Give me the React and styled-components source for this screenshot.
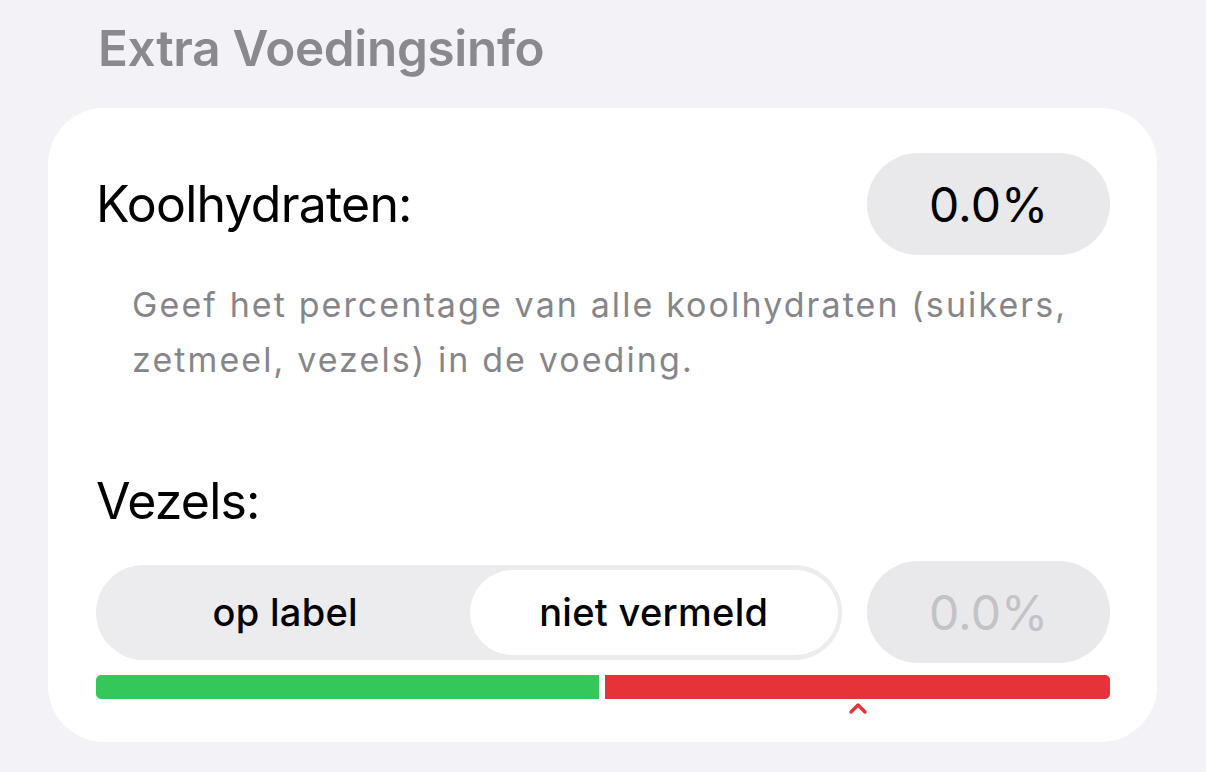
import React from 'react'
import styled, { createGlobalStyle } from 'styled-components'

const GlobalStyle = createGlobalStyle`
  html, body {
    margin: 0;
    padding: 0;
    background: #f2f2f7;
    font-family: Inter, "Noto Sans", sans-serif;
    -webkit-font-smoothing: antialiased;
  }
`

const Page = styled.div`
  width: 1206px;
  height: 772px;
  padding: 0 0 0 48px;
  box-sizing: border-box;
  overflow: hidden;
`

const SectionTitle = styled.h2`
  margin: 0;
  padding: 18px 0 0 50px;
  height: 90px;
  box-sizing: border-box;
  font-size: 49.4px;
  line-height: 60px;
  font-weight: 600;
  letter-spacing: -0.3px;
  color: #8a8a8e;
`

const Card = styled.div`
  width: 1109px;
  height: 634px;
  margin-top: 18px;
  background: #fff;
  border-radius: 56px;
  padding: 45px 47px 0 48px;
  box-sizing: border-box;
  display: flex;
  flex-direction: column;
`

const Row = styled.div`
  display: flex;
  align-items: center;
  justify-content: space-between;
  gap: 25px;
`

const Label = styled.div`
  font-size: 50px;
  line-height: 60px;
  color: #000;
  letter-spacing: -0.8px;
`

const ValuePill = styled.div`
  flex: none;
  width: 243px;
  height: 102px;
  border-radius: 51px;
  background: #e9e9eb;
  display: flex;
  align-items: center;
  justify-content: center;
  font-size: 48px;
  color: ${p => (p.$muted ? '#c3c3c7' : '#000')};
`

const Hint = styled.p`
  margin: 22px 0 0 36px;
  font-size: 34px;
  line-height: 55px;
  color: #86868a;
  letter-spacing: 2.1px;
`

const VezelsLabel = styled(Label)`
  margin-top: 84px;
`

const ControlRow = styled(Row)`
  margin-top: 30px;
`

const Segmented = styled.div`
  flex: 1;
  height: 95px;
  border-radius: 48px;
  background: #ececee;
  padding: 5px 4px 5px 5px;
  box-sizing: border-box;
  display: grid;
  grid-template-columns: 1fr 1fr;
`

const Segment = styled.div`
  display: flex;
  align-items: center;
  justify-content: center;
  border-radius: 43px;
  font-size: 38px;
  font-weight: 500;
  letter-spacing: 0.3px;
  color: #000;
  background: ${p => (p.$active ? '#fff' : 'transparent')};
`

const BarWrap = styled.div`
  position: relative;
  margin-top: 12px;
`

const Bar = styled.div`
  display: flex;
  gap: 6px;
  height: 24px;
`

const BarPart = styled.div`
  border-radius: ${p => (p.$first ? '5px 0 0 5px' : '0 5px 5px 0')};
  background: ${p => p.$color};
`

const Caret = styled.svg`
  position: absolute;
  top: 26px;
  width: 20px;
  height: 14px;
`

export default function App() {
  return (
    <Page>
      <GlobalStyle />
      <SectionTitle>Extra Voedingsinfo</SectionTitle>
      <Card>
        <Row>
          <Label>Koolhydraten:</Label>
          <ValuePill>0.0%</ValuePill>
        </Row>
        <Hint>
          Geef het percentage van alle koolhydraten (suikers,
          <br />
          zetmeel, vezels) in de voeding.
        </Hint>
        <VezelsLabel>Vezels:</VezelsLabel>
        <ControlRow>
          <Segmented>
            <Segment>op label</Segment>
            <Segment $active>niet vermeld</Segment>
          </Segmented>
          <ValuePill $muted>0.0%</ValuePill>
        </ControlRow>
        <BarWrap>
          <Bar>
            <BarPart $first $color="#34c759" style={{ width: 503 }} />
            <BarPart $color="#e63338" style={{ flex: 1 }} />
          </Bar>
          <Caret viewBox="0 0 20 14" style={{ left: 752 }}>
            <path d="M3 11 L10 4 L17 11" fill="none" stroke="#e63338" strokeWidth="3.4" strokeLinecap="round" strokeLinejoin="round" />
          </Caret>
        </BarWrap>
      </Card>
    </Page>
  )
}
